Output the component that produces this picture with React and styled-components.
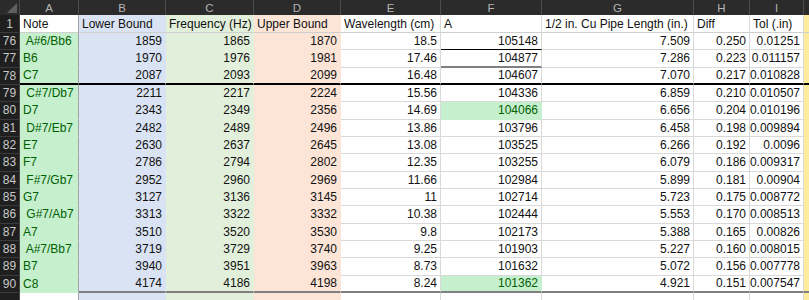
import React from 'react'
import styled, { createGlobalStyle } from 'styled-components'

const GlobalStyle = createGlobalStyle`
    html, body {
        margin: 0;
        padding: 0;
        background: #fff;
    }
    body {
        font-family: "Liberation Sans", Arial, sans-serif;
    }
`

const GOOD = '#c6efce'
const GOOD_INK = '#006100'
const GRID = '#d9d9d9'

const columns = [
    { letter: 'A', title: 'Note', fill: GOOD, ink: GOOD_INK, left: true, edge: '#a3a3a3' },
    { letter: 'B', title: 'Lower Bound', fill: '#dae3f3' },
    { letter: 'C', title: 'Frequency (Hz)', fill: '#e2efda' },
    { letter: 'D', title: 'Upper Bound', fill: '#fce4d6' },
    { letter: 'E', title: 'Wavelength (cm)' },
    { letter: 'F', title: 'A' },
    { letter: 'G', title: '1/2 in. Cu Pipe Length (in.)' },
    { letter: 'H', title: 'Diff' },
    { letter: 'I', title: 'Tol (.in)' },
    { letter: '', title: '', fill: '#ffeb9c' },
]

const rows = [
    [76, ' A#6/Bb6', '1859', '1865', '1870', '18.5', '105148', '7.509', '0.250', '0.01251'],
    [77, 'B6', '1970', '1976', '1981', '17.46', '104877', '7.286', '0.223', '0.011157'],
    [78, 'C7', '2087', '2093', '2099', '16.48', '104607', '7.070', '0.217', '0.010828'],
    [79, ' C#7/Db7', '2211', '2217', '2224', '15.56', '104336', '6.859', '0.210', '0.010507'],
    [80, 'D7', '2343', '2349', '2356', '14.69', '104066', '6.656', '0.204', '0.010196'],
    [81, ' D#7/Eb7', '2482', '2489', '2496', '13.86', '103796', '6.458', '0.198', '0.009894'],
    [82, 'E7', '2630', '2637', '2645', '13.08', '103525', '6.266', '0.192', '0.0096'],
    [83, 'F7', '2786', '2794', '2802', '12.35', '103255', '6.079', '0.186', '0.009317'],
    [84, ' F#7/Gb7', '2952', '2960', '2969', '11.66', '102984', '5.899', '0.181', '0.00904'],
    [85, 'G7', '3127', '3136', '3145', '11', '102714', '5.723', '0.175', '0.008772'],
    [86, ' G#7/Ab7', '3313', '3322', '3332', '10.38', '102444', '5.553', '0.170', '0.008513'],
    [87, 'A7', '3510', '3520', '3530', '9.8', '102173', '5.388', '0.165', '0.00826'],
    [88, ' A#7/Bb7', '3719', '3729', '3740', '9.25', '101903', '5.227', '0.160', '0.008015'],
    [89, 'B7', '3940', '3951', '3963', '8.73', '101632', '5.072', '0.156', '0.007778'],
    [90, 'C8', '4174', '4186', '4198', '8.24', '101362', '4.921', '0.151', '0.007547'],
]

// cells with the "Good" style outside column A
const goodCells = { '80-5': true, '90-5': true }

function bottomFor(num, ci, fill) {
    if (num === 78) return '2px solid #000'
    if (num === 90 && ci > 0) return '2px solid #7f7f7f'
    if (num === 76 && ci === 5) return '1px solid #000'
    if (num === 77 && ci === 5) return '2px solid #808080'
    return `1px solid ${fill || GRID}`
}

export default function App() {
    return (
        <>
            <GlobalStyle />
            <Sheet>
                <Corner>
                    <svg width="12" height="12" viewBox="0 0 12 12">
                        <polygon points="11,1 11,11 1,11" fill="#5f5f5f" />
                    </svg>
                </Corner>
                {columns.map((c, i) => (
                    <ColHead key={'h' + i}>{c.letter}</ColHead>
                ))}

                <RowHead>1</RowHead>
                {columns.map((c, i) => (
                    <Cell
                        key={'t' + i}
                        $fill={i === 0 ? '#fff' : c.fill}
                        $edge={i === 0 ? c.edge : c.fill}
                        $under="1px solid #cfcfcf"
                        $left
                    >
                        {c.title}
                    </Cell>
                ))}

                {rows.map((r) => {
                    const num = r[0]
                    return (
                        <React.Fragment key={num}>
                            <RowHead>{num}</RowHead>
                            {columns.map((c, ci) => {
                                const good = goodCells[num + '-' + ci]
                                const fill = good ? GOOD : c.fill
                                return (
                                    <Cell
                                        key={ci}
                                        $fill={fill}
                                        $ink={good ? GOOD_INK : c.ink}
                                        $edge={c.edge || fill}
                                        $under={bottomFor(num, ci, fill)}
                                        $left={c.left}
                                    >
                                        {r[ci + 1] || ''}
                                    </Cell>
                                )
                            })}
                        </React.Fragment>
                    )
                })}

                <RowHead />
                {columns.map((c, i) => (
                    <Cell key={'e' + i} $fill={i === 0 ? '#fff' : c.fill} $edge={i === 0 ? c.edge : c.fill} />
                ))}
            </Sheet>
        </>
    )
}

const Sheet = styled.div`
    display: grid;
    width: 809px;
    height: 300px;
    overflow: hidden;
    grid-template-columns: 20px 59px 87px 88px 87px 100px 101px 152px 56px 54px 1fr;
    grid-template-rows: 15px 18px repeat(16, 17.33px);
    font-size: 12px;
    background: #fff;
`
const Corner = styled.div`
    background: #2b2b2b;
    display: flex;
    align-items: flex-end;
    justify-content: flex-end;
    padding: 0 1px 1px 0;
    border-right: 1px solid #4a4a4a;
    box-sizing: border-box;
`
const ColHead = styled.div`
    background: #2b2b2b;
    color: #b4b4b4;
    display: flex;
    align-items: center;
    justify-content: center;
    font-size: 11.5px;
    border-right: 1px solid #4d4d4d;
    box-sizing: border-box;
    &:last-child {
        border-right: none;
    }
`
const RowHead = styled.div`
    background: #1f1f1f;
    color: #c9c9c9;
    display: flex;
    align-items: center;
    justify-content: center;
    font-size: 12px;
    border-bottom: 1px solid #3b3b3b;
    border-right: 1px solid #444;
    box-sizing: border-box;
`
const Cell = styled.div`
    box-sizing: border-box;
    display: flex;
    align-items: center;
    justify-content: ${(p) => (p.$left ? 'flex-start' : 'flex-end')};
    padding: ${(p) => (p.$left ? '0 2px 0 3px' : '0 3px 0 2px')};
    white-space: pre;
    overflow: hidden;
    background: ${(p) => p.$fill || '#fff'};
    color: ${(p) => p.$ink || '#111'};
    border-right: 1px solid ${(p) => p.$edge || GRID};
    border-bottom: ${(p) => p.$under || `1px solid ${p.$fill || GRID}`};
`
